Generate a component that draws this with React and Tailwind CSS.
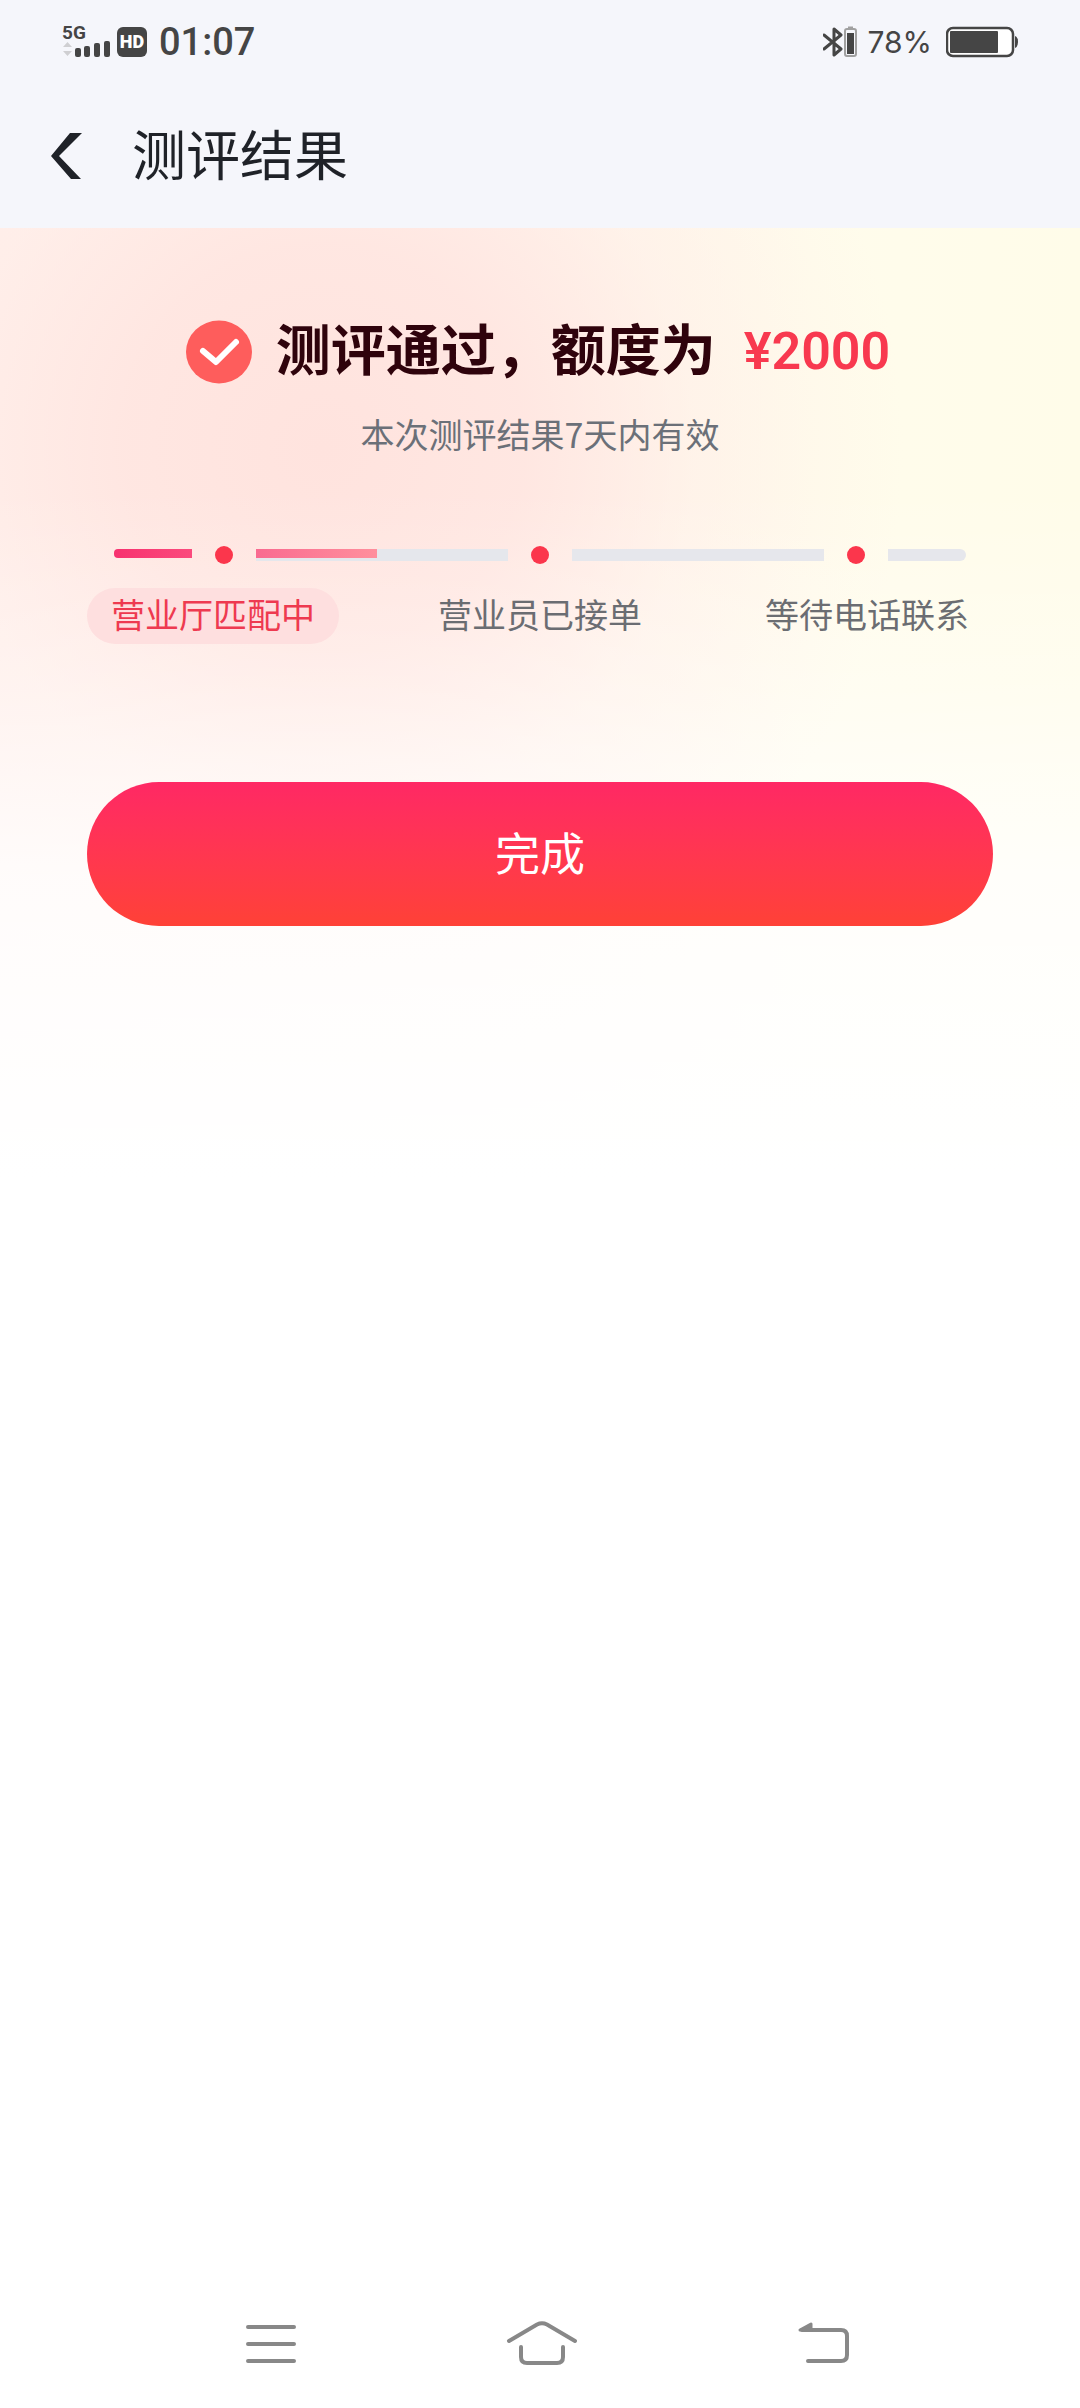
const steps = [
  { label: "营业厅匹配中", active: true },
  { label: "营业员已接单", active: false },
  { label: "等待电话联系", active: false }
];

function StatusBar() {
  return (
    <div className="flex items-center justify-between h-21 pl-[62px] pr-[60px] text-[#454545] font-['Roboto','Noto_Sans_CJK_SC',sans-serif]">
      <div className="flex items-center">
        <div className="flex flex-col">
          <span className="text-[19px] leading-4 font-bold">5G</span>
          <svg width="50" height="18" viewBox="0 0 50 18">
            <path d="M1 6 L5.500 1 L10 6Z M1 10 L10 10 L5.500 15Z" fill="#cfcfd2" />
            <g fill="#454545">
              <rect x="13" y="7" width="6" height="9" rx="2" />
              <rect x="22" y="5" width="6" height="11" rx="2" />
              <rect x="32" y="2" width="6" height="14" rx="2" />
              <rect x="42" y="0" width="6" height="16" rx="2" />
            </g>
          </svg>
        </div>
        <span className="ml-[5px] flex items-center justify-center size-[30px] rounded-md bg-[#454545] text-white text-lg leading-none font-black">
          HD
        </span>
        <span className="ml-3 text-[38px] leading-none font-medium">01:07</span>
      </div>

      <div className="flex items-center">
        <svg width="36" height="32" viewBox="0 0 36 32" fill="none">
          <path d="M1 9 L18 23 L11 29 V3 L18 9 L1 23" stroke="#454545" strokeWidth="3" strokeLinejoin="round" strokeLinecap="round" />
          <rect x="22" y="3" width="11" height="27" rx="2" stroke="#a0a0a0" strokeWidth="2" />
          <path d="M25 1.500H30" stroke="#a0a0a0" strokeWidth="2" />
          <rect x="24" y="7" width="7" height="21" fill="#454545" />
        </svg>
        <span className="ml-2 text-[30px] leading-none font-['Inter',sans-serif]">78%</span>
        <svg className="ml-3.5" width="74" height="32" viewBox="0 0 74 32">
          <rect x="1" y="2" width="66" height="28" rx="6" fill="white" stroke="#454545" strokeWidth="2.500" />
          <rect x="4" y="5" width="48" height="22" rx="1" fill="#454545" />
          <path d="M69 10 Q72 11 72 16 Q72 21 69 22Z" fill="#454545" />
        </svg>
      </div>
    </div>
  );
}

function Progress() {
  return (
    <div className="flex items-start px-[27px]">
      <div className="mt-[3px] w-[78px] h-[9px] rounded-l-sm bg-linear-to-r from-[#f7316f] to-[#fb4a7d]" />
      <Dot />
      <div className="mt-[3px] flex-1 flex h-3 bg-[#e5e7ec]">
        <div className="w-12/25 h-[9px] bg-linear-to-r from-[#f96a90] to-[#ff8f9d]" />
      </div>
      <Dot />
      <div className="mt-[3px] flex-1 h-3 bg-[#e6e7ec]" />
      <Dot />
      <div className="mt-[3px] w-[78px] h-3 rounded-r-md bg-[#e6e7ec]" />
    </div>
  );
}

function Dot() {
  return (
    <div className="flex justify-center w-16">
      <span className="size-[18px] rounded-full bg-[#fb364c]" />
    </div>
  );
}

export default function App() {
  return (
    <div className="min-h-dvh flex flex-col bg-white font-['Noto_Sans_CJK_SC',sans-serif]">

      {/* Header */}
      <header className="h-57 bg-[#f5f6fb]">
        <StatusBar />
        <div className="flex items-center h-36 pl-12 text-[#1f2228]">
          <button aria-label="返回">
            <svg width="36" height="48" viewBox="0 0 36 48" fill="currentColor">
              <path d="M22 1H34L11 24L33 47H23L3 24Z" />
            </svg>
          </button>
          <h1 className="ml-12 pb-1.5 text-[54px] leading-none">测评结果</h1>
        </div>
      </header>

      {/* Result */}
      <main className="flex-1 px-[87px] pt-21 bg-[linear-gradient(to_bottom,#ffffff00_260px,#ffffff50_460px,#ffffffc8_650px,#ffffff_950px),radial-gradient(circle_at_30%_220px,#ffe3de_0px,#ffe5e0e0_200px,#ffebe570_370px,#fff3ec00_580px),linear-gradient(to_right,#fff0ec_0%,#fff4ed_45%,#fffcec_75%,#fffce9_100%)]">
        <div className="flex items-center justify-center h-20 pr-1">
          <svg width="66" height="64" viewBox="0 0 66 64">
            <ellipse cx="33" cy="32" rx="33" ry="31.500" fill="#fe5d5c" />
            <path d="M17 31 L30 42 L50 22" fill="none" stroke="white" strokeWidth="6" strokeLinecap="round" strokeLinejoin="round" />
          </svg>
          <h2 className="ml-6 pb-3 text-[55px] leading-none font-bold text-[#2f030c]">测评通过，额度为</h2>
          <span className="ml-7 text-[52px] leading-none font-semibold text-[#f8394f] font-['Roboto',sans-serif]">¥2000</span>
        </div>
        <p className="mt-3.5 text-center text-[34px] leading-14 text-[#6b7078]">本次测评结果7天内有效</p>

        <div className="mt-21">
          <Progress />
          <div className="mt-6 flex justify-between">
            {steps.map(step => (
              <span
                key={step.label}
                className={`px-6 pb-1 rounded-full text-[34px] leading-13 ${
                  step.active ? "bg-[#fedfdf] text-[#ee3a50]" : "text-[#6b6d72]"
                }`}
              >
                {step.label}
              </span>
            ))}
          </div>
        </div>

        <button className="mt-[138px] pb-1 w-full h-36 rounded-full bg-linear-to-b from-[#ff2864] to-[#ff4136] text-[45px] text-white">
          完成
        </button>
      </main>

      {/* System navigation */}
      <nav className="flex items-center justify-between h-32 pl-[245px] pr-[230px]">
        <button aria-label="菜单">
          <svg width="52" height="48" viewBox="0 0 52 48" stroke="#888888" strokeWidth="4" strokeLinecap="round">
            <path d="M3 7H49M3 24H49M3 41H49" />
          </svg>
        </button>
        <button aria-label="主页">
          <svg width="72" height="48" viewBox="0 0 72 48" fill="none" stroke="#888888" strokeWidth="4" strokeLinecap="round">
            <path d="M3 21L31 4.500Q36 2 41 4.500L69 21" />
            <path d="M15 27V37Q15 43 21 43H51Q57 43 57 37V27" />
          </svg>
        </button>
        <button aria-label="后退">
          <svg width="64" height="48" viewBox="0 0 64 48" fill="none" stroke="#888888" strokeWidth="4" strokeLinecap="round">
            <path d="M16 10H55Q61 10 61 16V35Q61 41 55 41H22" />
            <path d="M14 10L25 4V10Z" fill="#888888" strokeWidth="3" strokeLinejoin="round" />
          </svg>
        </button>
      </nav>
    </div>
  );
}
